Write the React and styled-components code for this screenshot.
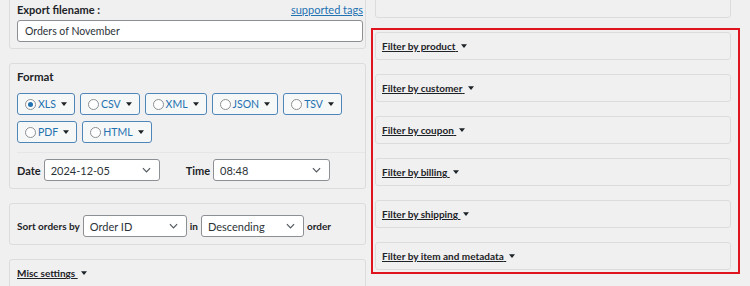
import React from "react";
import styled, { createGlobalStyle } from "styled-components";

const GlobalStyle = createGlobalStyle`
  html, body {
    margin: 0;
    background: #f0f0f1;
    font-family: Lato, "Open Sans", sans-serif;
    color: #1d2327;
    overflow: hidden;
  }
`;

const formats = [
  ["XLS", true],
  ["CSV"],
  ["XML"],
  ["JSON"],
  ["TSV"],
  ["PDF"],
  ["HTML"],
];

const filters = [
  "Filter by product",
  "Filter by customer",
  "Filter by coupon",
  "Filter by billing",
  "Filter by shipping",
  "Filter by item and metadata",
];

const Caret = () => (
  <CaretIcon viewBox="0 0 8 5">
    <path d="M0 0h8L4 5z" fill="#1d2327" />
  </CaretIcon>
);

const Chevron = () => (
  <ChevronIcon viewBox="0 0 10 6">
    <path d="M1 1l4 4 4-4" fill="none" stroke="#50575e" strokeWidth="1.3" />
  </ChevronIcon>
);

const Select = ({ value, width }) => (
  <SelectBox $width={width}>
    <span>{value}</span>
    <Chevron />
  </SelectBox>
);

const App = () => {
  return (
    <>
      <GlobalStyle />
      <Page>
        <LeftColumn>
          <Panel $pad="6px 2px 6px 7px">
            <LabelRow>
              <Bold>Export filename :</Bold>
              <TagLink href="#">supported tags</TagLink>
            </LabelRow>
            <TextInput>Orders of November</TextInput>
          </Panel>

          <Panel $pad="5px 7px 0 7px">
            <Heading>Format</Heading>
            <FormatGrid>
              {formats.map(([name, checked]) => (
                <FormatButton key={name}>
                  <Radio $checked={checked} />
                  {name}
                  <Caret />
                </FormatButton>
              ))}
            </FormatGrid>
            <DateRow>
              <Bold>Date</Bold>
              <Select value="2024-12-05" width={116} />
              <TimeLabel>Time</TimeLabel>
              <Select value="08:48" width={117} />
            </DateRow>
          </Panel>

          <Panel $pad="11px 7px 7px 7px">
            <SortRow>
              <SmallBold>Sort orders by</SmallBold>
              <Select value="Order ID" width={104} />
              <SmallBold>in</SmallBold>
              <Select value="Descending" width={103} />
              <SmallBold>order</SmallBold>
            </SortRow>
          </Panel>

          <Panel $pad="7px 7px 20px">
            <Toggle>
              <span>Misc settings </span>
              <Caret />
            </Toggle>
          </Panel>
        </LeftColumn>

        <RightColumn>
          <TopPanel>
            <WideInput />
          </TopPanel>
          <Highlight>
            {filters.map((f) => (
              <FilterPanel key={f}>
                <Toggle>
                  <span>{f} </span>
                  <Caret />
                </Toggle>
              </FilterPanel>
            ))}
          </Highlight>
        </RightColumn>
      </Page>
    </>
  );
};

export default App;

const Page = styled.div`
  display: grid;
  grid-template-columns: 357px 369px;
  column-gap: 5px;
  align-items: start;
  padding-left: 9px;
  margin-top: -6px;
`;

const LeftColumn = styled.div`
  display: flex;
  flex-direction: column;
  gap: 14px;
`;

const RightColumn = styled.div`
  display: flex;
  flex-direction: column;
  gap: 10px;
  margin-top: -14px;
`;

const Panel = styled.div`
  box-sizing: border-box;
  border: 1px solid #dcdcde;
  border-radius: 3px;
  background: #f0f0f1;
  padding: ${(p) => p.$pad};
`;

const TopPanel = styled(Panel)`
  margin: 0 9px 0 4px;
  padding: 0 4px 17px 6px;
`;

const LabelRow = styled.div`
  display: flex;
  justify-content: space-between;
  align-items: baseline;
  padding-top: 2px;
  height: 16px;
`;

const Bold = styled.span`
  font-weight: 700;
  font-size: 11px;
  color: #1d2327;
  white-space: nowrap;
`;

const SmallBold = styled(Bold)`
  font-size: 10px;
`;

const TagLink = styled.a`
  font-size: 11px;
  color: #2271b1;
  text-decoration: underline;
`;

const TextInput = styled.div`
  box-sizing: border-box;
  height: 22px;
  margin-top: 1px;
  padding: 0 7px;
  border: 1px solid #8c8f94;
  border-radius: 3px;
  background: #fff;
  font-size: 10.5px;
  line-height: 20px;
  color: #2c3338;
`;

const WideInput = styled.div`
  height: 18px;
  border: 1px solid #8c8f94;
  border-top: none;
  border-radius: 0 0 3px 3px;
  background: #fff;
`;

const Heading = styled.div`
  font-weight: 700;
  font-size: 11.5px;
  height: 16px;
  padding-top: 1px;
`;

const FormatGrid = styled.div`
  display: flex;
  flex-wrap: wrap;
  gap: 6px 5px;
  margin: 7px -7px 0 0;
  padding: 0 0 9px 0;
  border-bottom: 1px solid #e6e6e8;
`;

const FormatButton = styled.div`
  box-sizing: border-box;
  height: 22px;
  display: flex;
  align-items: center;
  gap: 2px;
  padding: 0 7px 0 7px;
  border: 1px solid #4f86b9;
  border-radius: 3px;
  background: #f6f7f7;
  color: #2271b1;
  font-size: 10.5px;
`;

const Radio = styled.span`
  box-sizing: border-box;
  width: 11px;
  height: 11px;
  border-radius: 50%;
  border: 1px solid #8c8f94;
  background: #fff;
  display: grid;
  place-items: center;
  &::after {
    content: "";
    width: 5px;
    height: 5px;
    border-radius: 50%;
    background: ${(p) => (p.$checked ? "#2271b1" : "transparent")};
  }
`;

const CaretIcon = styled.svg`
  width: 6px;
  height: 4px;
  margin-left: 3px;
  flex: none;
`;

const ChevronIcon = styled.svg`
  width: 9px;
  height: 6px;
  flex: none;
`;

const DateRow = styled.div`
  display: flex;
  align-items: center;
  gap: 3px;
  padding: 6px 0 7px;
`;

const TimeLabel = styled(Bold)`
  margin-left: 23px;
`;

const SelectBox = styled.div`
  box-sizing: border-box;
  width: ${(p) => p.$width}px;
  height: 22px;
  display: flex;
  align-items: center;
  justify-content: space-between;
  padding: 0 8px 0 6px;
  border: 1px solid #8c8f94;
  border-radius: 3px;
  background: #fff;
  font-size: 11px;
  color: #2c3338;
`;

const SortRow = styled.div`
  display: flex;
  align-items: center;
  gap: 3px;
`;

const Toggle = styled.div`
  display: flex;
  align-items: center;
  font-weight: 700;
  font-size: 10px;
  color: #1d2327;
  & span {
    text-decoration: underline;
    white-space: pre;
  }
`;

const Highlight = styled.div`
  box-sizing: border-box;
  border: 2px solid #e0141e;
  padding: 2px 7px 2px 2px;
  display: flex;
  flex-direction: column;
  gap: 14px;
`;

const FilterPanel = styled.div`
  box-sizing: border-box;
  height: 28px;
  display: flex;
  align-items: center;
  padding: 0 6px;
  border: 1px solid #dcdcde;
  border-radius: 3px;
  background: #f0f0f1;
`;
